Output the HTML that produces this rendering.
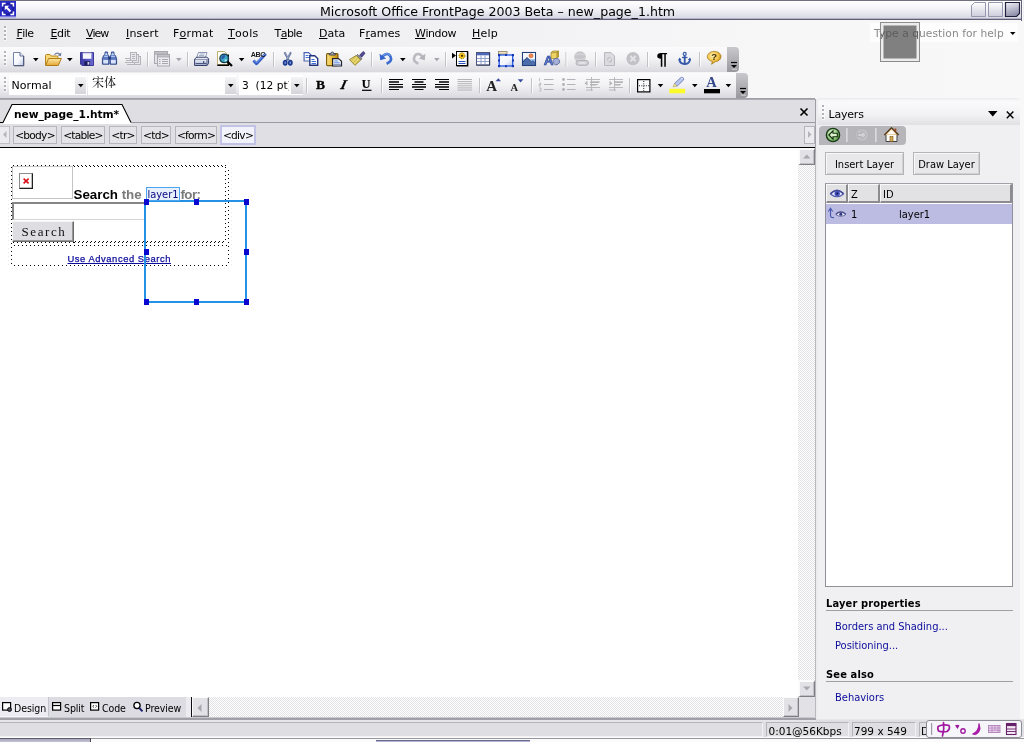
<!DOCTYPE html>
<html><head><meta charset="utf-8"><title>Microsoft Office FrontPage 2003 Beta - new_page_1.htm</title>
<style>
*{box-sizing:border-box;margin:0;padding:0}
html,body{width:1024px;height:742px;overflow:hidden;background:linear-gradient(90deg,#ebebee 0,#f1f1f3 45%,#f7f7f8 75%,#f8f8f9 100%);font-family:"DejaVu Sans","Liberation Sans",sans-serif;font-size:10.67px;color:#000}
.a{position:absolute}
.t{position:absolute;white-space:nowrap;line-height:14px}
.th{font-family:"DejaVu Sans Condensed","Liberation Sans",sans-serif;font-size:11px}
svg{position:absolute;overflow:visible}
#title{left:0;top:0;width:1021px;height:20px;background:linear-gradient(#ffffff 0,#f6f6fa 35%,#e6e6ee 70%,#d6d6e4 100%);border-top:1px solid #70707f;border-bottom:1px solid #5e5e76;box-shadow:inset 0 -1px 0 #b4b4c6}
#menubar{left:0;top:20px;width:1024px;height:27px}
.tb{left:0;height:25px;background:linear-gradient(#fbfbfc 0,#f3f3f6 45%,#e6e6ea 75%,#d8d8de 100%)}
.tbend{width:12px;height:25px;background:linear-gradient(#c9c9cd,#98989e);border-radius:0 4px 4px 0}
.grip{width:2px;background:repeating-linear-gradient(#b2b2ba 0 2px,rgba(255,255,255,.6) 2px 4px);box-shadow:1px 0 0 rgba(255,255,255,.5)}
.sep{width:1px;height:15px;background:#b4b4bc;box-shadow:1px 0 0 rgba(255,255,255,.8)}
#root{position:absolute;left:0;top:0;width:1024px;height:742px;overflow:hidden;will-change:transform}
</style></head><body><div id="root">
<!-- title bar -->
<div class="a" id="title"></div>
<div class="a" style="left:1021.300px;top:0;width:1px;height:20.500px;background:#62627a"></div><div class="a" style="left:1022.500px;top:0;width:2px;height:21px;background:#f0f0f5"></div>
<svg style="left:0;top:1px" width="16" height="17" viewBox="0 0 16 17"><rect width="16" height="15.700" fill="#2a2ac6"/><rect y="15.700" width="16" height="1.300" fill="#b8b8ee"/><circle cx="8" cy="8" r="5.200" fill="none" stroke="#1c1c98" stroke-width="1.600"/><path d="M2.600 5.600V2.600H5.600M10.400 2.600H13.400V5.600M13.400 10.400V13.400H10.400M5.600 13.400H2.600V10.400" fill="none" stroke="#fff" stroke-width="1.500"/><path d="M4.800 4.800H9.200L7.700 6.300 11.200 9.800 9.800 11.200 6.300 7.700 4.800 9.200z" fill="#fff"/></svg>
<div class="t" style="left:320px;top:3.7px;font-size:12.6px;line-height:16px">Microsoft Office FrontPage 2003 Beta – new_page_1.htm</div>
<svg style="left:971px;top:2px" width="50" height="15" viewBox="0 0 50 15">
<defs><linearGradient id="wb1" x1="0" y1="0" x2="0" y2="1"><stop offset="0" stop-color="#ffffff"/><stop offset="1" stop-color="#ccccdc"/></linearGradient>
<linearGradient id="wb3" x1="0" y1="0" x2=".3" y2="1"><stop offset="0" stop-color="#f2f2f8"/><stop offset="1" stop-color="#9090ac"/></linearGradient></defs>
<path d="M3.5 .5H14.5V14.5H.5V3.5z" fill="url(#wb1)" stroke="#9696ac"/>
<path d="M17.5 .5H31.5V14.5H17.5z" fill="url(#wb1)" stroke="#9696ac"/>
<path d="M34.5 .5H48.5V11.5L45.5 14.5H34.5z" fill="url(#wb3)" stroke="#20203c" stroke-width="1.2"/>
</svg>
<!-- menubar -->
<div class="a" id="menubar"></div>
<div class="a grip" style="left:4px;top:26px;height:15px"></div>
<div class="t" style="left:16.5px;top:27px;font-size:11px;font-kerning:none;letter-spacing:-0.53px"><u>F</u>ile</div>
<div class="t" style="left:50.5px;top:27px;font-size:11px;font-kerning:none;letter-spacing:-0.4px"><u>E</u>dit</div>
<div class="t" style="left:86px;top:27px;font-size:11px;font-kerning:none;letter-spacing:-1.0px"><u>V</u>iew</div>
<div class="t" style="left:126px;top:27px;font-size:11px;font-kerning:none;letter-spacing:0.2px"><u>I</u>nsert</div>
<div class="t" style="left:173px;top:27px;font-size:11px;font-kerning:none;letter-spacing:0.2px">F<u>o</u>rmat</div>
<div class="t" style="left:228px;top:27px;font-size:11px;font-kerning:none;letter-spacing:0.33px"><u>T</u>ools</div>
<div class="t" style="left:274.5px;top:27px;font-size:11px;font-kerning:none;letter-spacing:-0.55px">T<u>a</u>ble</div>
<div class="t" style="left:319px;top:27px;font-size:11px;font-kerning:none;letter-spacing:0.0px"><u>D</u>ata</div>
<div class="t" style="left:359px;top:27px;font-size:11px;font-kerning:none;letter-spacing:0.08px">F<u>r</u>ames</div>
<div class="t" style="left:415px;top:27px;font-size:11px;font-kerning:none;letter-spacing:-0.44px"><u>W</u>indow</div>
<div class="t" style="left:472px;top:27px;font-size:11px;font-kerning:none;letter-spacing:0.2px"><u>H</u>elp</div>
<!-- help box -->
<div class="a" style="left:870px;top:23px;width:148px;height:19px;background:#fdfdfe"></div>
<div class="t" style="left:874px;top:26.5px;color:#8a8a8a;letter-spacing:.06px;font-size:10.67px">Type a question for help</div>
<div class="a" style="left:880px;top:22px;width:40px;height:40px;background:#808080;border:1px solid #8c8c8c;box-shadow:inset 0 0 0 2.5px #ececec;overflow:hidden"><div class="t" style="left:-7px;top:3.5px;color:#5c5c5c;letter-spacing:.06px;font-size:10.67px">Type a question for help</div></div>
<svg style="left:1010px;top:32px" width="6" height="4"><path d="M0 0h5.5L2.75 3z" fill="#000"/></svg>
<!-- toolbar 1 -->
<div class="a tb" style="top:47px;width:729px"></div>
<div class="a tbend" style="left:727px;top:47px"></div>
<svg style="left:731px;top:62px" width="7" height="7"><path d="M0 .5h6" stroke="#000" stroke-width="1.2"/><path d="M0 3h6L3 6z" fill="#000"/><path d="M1 7.2h5" stroke="#fff" stroke-width=".8" opacity=".7"/></svg>
<div class="a grip" style="left:4px;top:51px;height:15px"></div>
<svg style="left:0;top:0" width="760" height="100" viewBox="0 0 760 100">
<defs>
<linearGradient id="gPage" x1="0" y1="0" x2="1" y2="1"><stop offset="0" stop-color="#ffffff"/><stop offset=".6" stop-color="#f4f6fc"/><stop offset="1" stop-color="#b8c4e4"/></linearGradient>
<linearGradient id="gFold" x1="0" y1="0" x2="0" y2="1"><stop offset="0" stop-color="#fbe9a6"/><stop offset="1" stop-color="#e6a532"/></linearGradient>
<linearGradient id="gBlue" x1="0" y1="0" x2="0" y2="1"><stop offset="0" stop-color="#8aa6e6"/><stop offset="1" stop-color="#2f4c9e"/></linearGradient>
<linearGradient id="gGray" x1="0" y1="0" x2="0" y2="1"><stop offset="0" stop-color="#f2f2f4"/><stop offset="1" stop-color="#b4b4bc"/></linearGradient>
<radialGradient id="gHelp" cx=".4" cy=".35" r=".7"><stop offset="0" stop-color="#fff2b0"/><stop offset=".6" stop-color="#f0c040"/><stop offset="1" stop-color="#b07818"/></radialGradient>
<path id="dar" d="M0 0h5.6L2.8 3.2z"/>
</defs>
<!-- new -->
<g transform="translate(13,52)"><path d="M.5 .5H7L10.5 4V13.5H.5z" fill="url(#gPage)" stroke="#7484a8"/><path d="M7 .5V4h3.5" fill="#e8ecf8" stroke="#50608c" stroke-width=".9"/><path d="M1 13.8H10.8V4" fill="none" stroke="#3c4868" stroke-width=".9"/></g>
<use href="#dar" x="33" y="58" fill="#000"/>
<!-- open -->
<g transform="translate(45,52)"><path d="M.5 13V3.5q0-1 1-1H5l1.2 1.5H12q1 0 1 1V6" fill="#f6d878" stroke="#b8861c"/><path d="M.6 13.5L3.6 6.5H16.4L13.2 13.5z" fill="url(#gFold)" stroke="#b07c14"/><path d="M9.5 2.6q3-3 5.6 .2" fill="none" stroke="#6c7c9c" stroke-width="1.3"/><path d="M16.4 .6L15.9 4.3 12.6 3.2z" fill="#6c7c9c"/></g>
<use href="#dar" x="67" y="58" fill="#000"/>
<!-- save -->
<g transform="translate(80,52)"><linearGradient id="gSave" x1="0" y1="0" x2="1" y2="0"><stop offset="0" stop-color="#3a3aa2"/><stop offset="1" stop-color="#6a6ad2"/></linearGradient><path d="M.5 .5H13.500V13.500H2L.5 12z" fill="url(#gSave)" stroke="#2e2c8c" stroke-width=".9"/><rect x="2.800" y=".8" width="8.600" height="6" fill="#f6f6fe"/><rect x="2.800" y=".8" width="8.600" height="1.300" fill="#d4d4f2"/><rect x="4.300" y="9.300" width="5.600" height="4.200" fill="#1c1c58"/><rect x="7.500" y="10" width="1.800" height="2.700" fill="#d0d0f0"/></g>
<!-- binoculars -->
<g transform="translate(102,52)"><path d="M3 0H5.600V2.200L6.600 3.600 7 5.400V12.200H.4V6.400L1.600 3.600 3 2.200z" fill="url(#gBlue)" stroke="#1c3474" stroke-width=".8"/><path d="M9.400 0H12V2.200L13.400 3.600 14.600 6.400V12.200H8V5.400L8.400 3.600 9.400 2.200z" fill="url(#gBlue)" stroke="#1c3474" stroke-width=".8"/><rect x="6.400" y="4.600" width="2.200" height="3" fill="#1c3474"/><rect x="1.200" y="7.800" width="5" height="3.800" fill="#d8e2f8"/><rect x="8.800" y="7.800" width="5" height="3.800" fill="#d8e2f8"/><rect x="3.200" y="1.600" width="2.200" height="1.100" fill="#e8f0ff"/><rect x="9.600" y="1.600" width="2.200" height="1.100" fill="#e8f0ff"/><rect x="2.200" y="4" width="3.600" height="1" fill="#b4c8f0"/><rect x="9.200" y="4" width="3.600" height="1" fill="#b4c8f0"/></g>
<!-- publish (disabled) -->
<g transform="translate(125,52)" stroke="#b4b4ba" fill="#e8e8ec"><rect x="9.500" y="4.500" width="6" height="8"/><rect x="7.500" y="2.500" width="6" height="8"/><rect x="5.500" y=".5" width="6" height="8"/><path d="M0 6.500h5M1 8.500h6M0 10.500h9M2 12.500h7M7 2.500h3M7 4.500h3M7 6.500h3" fill="none"/></g>
<rect x="147" y="52" width="1" height="15" fill="#c2c2c8"/><rect x="148" y="52" width="1" height="15" fill="#fff" opacity=".8"/>
<!-- web comp disabled -->
<g transform="translate(154,51)" stroke="#a8a8ae" fill="#e4e4e8"><rect x=".5" y=".5" width="13" height="12"/><rect x=".5" y=".5" width="13" height="2.600" fill="#c0c0c6"/><rect x="3.500" y="3.500" width="12" height="11.500" fill="#ececf0"/><rect x="3.500" y="3.500" width="12" height="2.400" fill="#c4c4ca"/><path d="M3.500 6v9M8 8.500h6M8 10.500h6M8 12.500h6M5 8.500h1.500M5 10.500h1.500M5 12.500h1.500" fill="none"/></g>
<use href="#dar" x="176" y="58" fill="#a4a4aa"/>
<rect x="187" y="52" width="1" height="15" fill="#c2c2c8"/><rect x="188" y="52" width="1" height="15" fill="#fff" opacity=".8"/>
<!-- print -->
<g transform="translate(194,52)"><linearGradient id="gPrn" x1="0" y1="0" x2="0" y2="1"><stop offset="0" stop-color="#fbfcff"/><stop offset="1" stop-color="#b4bcd4"/></linearGradient><path d="M4.500 .5H13L11.300 5.600H2.600z" fill="#fff" stroke="#6c7ca0" stroke-width=".8"/><path d="M5.600 2h5.200M5 3.600h5.200" stroke="#8090b4" stroke-width=".8"/><path d="M.6 7L2.800 5.200H12.800L14.600 6.600V11.400L13 13.500H.6z" fill="url(#gPrn)" stroke="#34406c" stroke-width="1"/><path d="M13 7.600V13.500" stroke="#34406c" stroke-width=".8"/><path d="M.6 7.400H13L14.600 6.600" fill="none" stroke="#5c6c94" stroke-width=".7"/><path d="M1.500 11.600H12.500" stroke="#44507c" stroke-width="1.100"/><rect x="9" y="9.300" width="1.300" height="1.500" fill="#28305c"/></g>
<!-- preview -->
<g transform="translate(217,51)"><path d="M.5 .5H7.500L10.500 3.500V13.500H.5z" fill="#fffef2" stroke="#b8a868" stroke-width=".9"/><path d="M.3 14.300H11.300V3.500" fill="none" stroke="#000" stroke-width="1.400"/><circle cx="7.200" cy="7.400" r="4.300" fill="#3aa4c4" stroke="#16384c" stroke-width="1.300"/><path d="M4.500 6q1.500-2.500 3.500-1.800 .5 1.500-.8 2.500-1 1.800-2.700 1.200z" fill="#2c58b0"/><path d="M7.500 8.500q1.800-.8 2.800 .5-1 1.800-2.500 1.500z" fill="#a8e4ec"/><path d="M10.400 10.600L15 15" stroke="#000" stroke-width="2.200"/></g>
<use href="#dar" x="238.800" y="58" fill="#000"/>
<!-- spelling -->
<g transform="translate(251,51)"><path d="M2.500 9.500L5.500 12.800 14.800 2.800" fill="none" stroke="#305ac4" stroke-width="2.800" stroke-linejoin="round"/><path d="M2.500 9L5.500 12 14.500 2.500" fill="none" stroke="#86a8f0" stroke-width=".9"/><text x="-.3" y="5.800" font-family="Liberation Sans,sans-serif" font-weight="bold" font-size="7.200" fill="#1c1c1c" letter-spacing="-.4">ABC</text></g>
<rect x="273" y="52" width="1" height="15" fill="#c2c2c8"/><rect x="274" y="52" width="1" height="15" fill="#fff" opacity=".8"/>
<!-- cut -->
<g transform="translate(283,52)"><path d="M1.600 .3L5.700 8.200M7.900 .3L3.800 8.200" stroke="#5c6c98" stroke-width="1.900" fill="none"/><path d="M2.100 .6L5.500 7M7.400 .6L4 7" stroke="#b8c4dc" stroke-width=".6" fill="none"/><ellipse cx="2.200" cy="10.700" rx="1.600" ry="2.100" fill="#7c98dc" stroke="#1c3c90" stroke-width="1.700"/><ellipse cx="7.300" cy="10.700" rx="1.600" ry="2.100" fill="#7c98dc" stroke="#1c3c90" stroke-width="1.700"/></g>
<!-- copy -->
<g transform="translate(303.500,52)"><path d="M.6 .6H5L7.800 3.200V9H.6z" fill="#fff" stroke="#4c64b0" stroke-width="1.200"/><path d="M2 3.500h3M2 5.500h4.200" stroke="#4c78d8" stroke-width="1"/><path d="M6.300 3.800H11.200L14.200 6.600V13.300H6.300z" fill="#fff" stroke="#24347c" stroke-width="1.400"/><path d="M8 7.500h3M8 9.500h4.500M8 11.500h4.500" stroke="#3c6cd8" stroke-width="1"/></g>
<!-- paste -->
<g transform="translate(326,52)"><linearGradient id="gClip" x1="0" y1="0" x2="1" y2="0"><stop offset="0" stop-color="#fae488"/><stop offset=".5" stop-color="#e8b838"/><stop offset="1" stop-color="#c08414"/></linearGradient><rect x=".6" y="1.600" width="11.400" height="12" rx="1" fill="url(#gClip)" stroke="#7c5808" stroke-width="1.100"/><path d="M3.300 3V1.600H4.800Q5 0 6.300 0T7.800 1.600H9.300V3z" fill="#a8acb8" stroke="#3c4048" stroke-width=".9"/><path d="M6.600 6.600H12.500L15.500 9.200V14H6.600z" fill="#f4f6fc" stroke="#20242c" stroke-width="1.200"/><path d="M8.200 9h4M8.200 10.800h5.600" stroke="#5c8ce0" stroke-width="1"/><rect x="7.300" y="11.900" width="7.500" height="1.500" fill="#8c98b8"/></g>
<!-- format painter -->
<g transform="translate(349,51)"><path d="M10.600 4.200L14.200 .5 16 2.300 12.600 6.200z" fill="#544c98" stroke="#2c2860" stroke-width=".8"/><path d="M8.600 3.400L13 7.800 11.600 9 7.400 4.600z" fill="#8c90a0" stroke="#4c5060" stroke-width=".7"/><path d="M7.200 4.500L11.700 9 6 14.300 .5 8.600z" fill="#e8d870" stroke="#8c7820" stroke-width=".9"/><path d="M2.600 9.800L6.800 5.800M4.400 11.600L8.600 7.600M6.200 13.200L10.400 9.200" stroke="#c4ac40" stroke-width=".8"/></g>
<rect x="371" y="52" width="1" height="15" fill="#c2c2c8"/><rect x="372" y="52" width="1" height="15" fill="#fff" opacity=".8"/>
<!-- undo -->
<g transform="translate(379,52)"><path d="M3.500 4.300Q9 -0.500 11.400 4.400T7.600 11.800" fill="none" stroke="#3c6cd0" stroke-width="2.600"/><path d="M3.500 3.800Q9 -0.800 11.200 4" fill="none" stroke="#8cacf0" stroke-width=".8"/><path d="M.6 1.800L1.200 8.200 7.200 6.600z" fill="#3464cc"/></g>
<use href="#dar" x="400" y="58" fill="#000"/>
<!-- redo disabled -->
<g transform="translate(413,52)" opacity=".95"><path d="M9.500 4.300Q4 -0.500 1.600 4.400T5.400 11.800" fill="none" stroke="#b8b8be" stroke-width="2.600"/><path d="M12.400 1.800L11.800 8.200 5.800 6.600z" fill="#b0b0b6"/></g>
<use href="#dar" x="434" y="58" fill="#a4a4aa"/>
<rect x="445" y="52" width="1" height="15" fill="#c2c2c8"/><rect x="446" y="52" width="1" height="15" fill="#fff" opacity=".8"/>
<!-- web component -->
<g transform="translate(452,51)"><rect x="4.500" y=".5" width="11" height="14" fill="#fff" stroke="#000" stroke-width="1"/><path d="M15.600 .5V14.700H4.500" fill="none" stroke="#000" stroke-width="1.500"/><path d="M0 1.800L4 4.600 0 7.400z" fill="#000"/><circle cx="10" cy="4.800" r="3" fill="#f4c41c" stroke="#8c6808" stroke-width=".9" stroke-dasharray="1.300 .9"/><circle cx="10" cy="4.800" r="1.100" fill="#3c2c00"/><path d="M6.500 10.500h7M6.500 12.500h7" stroke="#2c54bc" stroke-width="1"/></g>
<!-- table -->
<g transform="translate(476,52)"><rect x=".5" y=".5" width="13" height="12.500" fill="#fcfcff" stroke="#4c5880" stroke-width="1"/><rect x="1" y="1" width="12" height="2.300" fill="#4c68b8"/><path d="M1 6.500h12M1 9.500h12M5 3.300v9.500M9 3.300v9.500" stroke="#8898c4" stroke-width=".9"/><path d="M.5 13.200H13.700V.5" fill="none" stroke="#2c3454" stroke-width=".9"/></g>
<!-- layer -->
<g transform="translate(498,51)"><rect x=".5" y=".5" width="8.500" height="2.600" fill="#f0e4c0" stroke="#988c74" stroke-width=".9"/><rect x="1.200" y="4" width="13.500" height="11" fill="url(#gPage)" stroke="#2458e0" stroke-width="1.300"/><g fill="#1434b8"><rect x="0" y="3" width="2.200" height="2.200"/><rect x="7" y="3" width="2" height="2"/><rect x="13.800" y="3" width="2.200" height="2.200"/><rect x="0" y="8.500" width="2" height="2"/><rect x="14" y="8.500" width="2" height="2"/><rect x="0" y="14" width="2.200" height="2.200"/><rect x="7" y="14.200" width="2" height="2"/><rect x="13.800" y="14" width="2.200" height="2.200"/></g></g>
<!-- picture -->
<g transform="translate(522,52)"><rect x=".5" y=".5" width="13" height="13" fill="#a4c8f0" stroke="#24407c" stroke-width="1.100"/><rect x="1" y="1" width="12" height="6" fill="#f4f8fe"/><circle cx="9" cy="3.800" r="2" fill="#f08850" stroke="#c85820" stroke-width=".6"/><path d="M1 10L5 5.500 9 9.500 11 8 13 10V13H1z" fill="#4c6cac"/><path d="M1 10L5 5.500 9 9.500" fill="none" stroke="#1c3468" stroke-width=".9"/></g>
<!-- drawing -->
<g transform="translate(544,51)"><path d="M7 1.600L9 0H14.500V6L12.500 7.600H7z" fill="#ecd464" stroke="#94781c" stroke-width=".7"/><path d="M12.500 1.600V7.600L14.500 6V0z" fill="#b89c30"/><path d="M7 1.600H12.500L14.500 0" fill="none" stroke="#94781c" stroke-width=".6"/><rect x="9" y="7.300" width="6.600" height="6.400" rx="3.100" fill="#a4b0d8" stroke="#5c6898" stroke-width=".8" transform="rotate(-35 12.300 10.500)"/><text x="-.3" y="14" font-family="Liberation Sans,sans-serif" font-weight="bold" font-size="13.500" fill="#5c78cc" stroke="#2c4490" stroke-width=".6">A</text></g>
<rect x="565.500" y="52" width="1" height="15" fill="#c2c2c8"/><rect x="566.500" y="52" width="1" height="15" fill="#fff" opacity=".8"/>
<!-- hyperlink disabled -->
<g transform="translate(573,51)"><circle cx="7" cy="6" r="5.800" fill="#c6c6ca"/><path d="M2.500 4q4-2.500 9 0M1.500 7.500q5 2.500 11 0" stroke="#dcdce0" fill="none" stroke-width=".9"/><rect x="3" y="9.500" width="12.500" height="4.800" rx="2.400" fill="#d0d0d4" stroke="#b0b0b6" stroke-width="1"/><path d="M6 12h6.500" stroke="#eeeef0" stroke-width="1.200"/></g>
<rect x="595" y="52" width="1" height="15" fill="#c2c2c8"/><rect x="596" y="52" width="1" height="15" fill="#fff" opacity=".8"/>
<!-- refresh disabled -->
<g transform="translate(604,52)"><path d="M.5 .5H7L10.500 4V13.500H.5z" fill="#dcdce0" stroke="#b8b8be"/><path d="M3.500 8.500Q3.500 5 6.500 5.500M7.500 7Q7.500 10.500 4.500 10" fill="none" stroke="#bcbcc2" stroke-width="1.100"/></g>
<!-- stop disabled -->
<g transform="translate(626,52)"><circle cx="7" cy="6.700" r="6.600" fill="#c2c2c6"/><path d="M4.300 4L9.700 9.400M9.700 4L4.300 9.400" stroke="#e4e4e8" stroke-width="2"/></g>
<rect x="647" y="52" width="1" height="15" fill="#c2c2c8"/><rect x="648" y="52" width="1" height="15" fill="#fff" opacity=".8"/>
<!-- pilcrow -->
<text x="656.400" y="64.800" font-family="Liberation Sans,sans-serif" font-weight="bold" font-size="16.500" fill="#000" textLength="11.300" lengthAdjust="spacingAndGlyphs">¶</text>
<!-- anchor -->
<g transform="translate(678.500,52)" fill="none" stroke="#3458a8"><circle cx="6.200" cy="1.900" r="1.500" stroke-width="1.200"/><path d="M6.200 3.500V11.500" stroke-width="1.800"/><path d="M3.500 5.500h5.400" stroke-width="1.300"/><path d="M.8 6.800Q1.200 11.800 6.200 12T11.600 6.800" stroke-width="1.900"/><path d="M0 8.500L.8 5.500 3 7.800zM12.400 8.500L11.600 5.500 9.400 7.800z" fill="#3458a8" stroke="none"/></g>
<rect x="699" y="52" width="1" height="15" fill="#c2c2c8"/><rect x="700" y="52" width="1" height="15" fill="#fff" opacity=".8"/>
<!-- help -->
<g transform="translate(707,51)"><path d="M7 .4C11 .4 14 2.600 14 5.600S11.400 10.400 8.200 10.700L4.600 13.300 5.400 10.400C2.200 9.800 .3 7.900 .3 5.600S3 .4 7 .4z" fill="url(#gHelp)" stroke="#a87c1c" stroke-width=".8"/><text x="4.300" y="9.200" font-family="Liberation Sans,sans-serif" font-weight="bold" font-size="9.500" fill="#3c2c08">?</text></g>
</svg>
<!-- toolbar 2 -->
<div class="a tb" style="top:73px;width:738px"></div>
<div class="a tbend" style="left:736px;top:73px"></div>
<svg style="left:740px;top:88px" width="7" height="7"><path d="M0 .5h6" stroke="#000" stroke-width="1.200"/><path d="M0 3h6L3 6z" fill="#000"/><path d="M1 7.200h5" stroke="#fff" stroke-width=".8" opacity=".7"/></svg>
<div class="a grip" style="left:4px;top:77px;height:15px"></div>
<div class="a" style="left:9px;top:75px;width:78px;height:20px;background:#fff"></div>
<div class="a" style="left:75px;top:77px;width:11px;height:17px;background:linear-gradient(#f4f4f6,#d4d4da)"></div>
<div class="t" style="left:11.500px;top:79px;font-size:11px;font-kerning:none">Normal</div>
<div class="a" style="left:88px;top:75px;width:148px;height:20px;background:#fff"></div>
<div class="a" style="left:225px;top:77px;width:11px;height:17px;background:linear-gradient(#f4f4f6,#d4d4da)"></div>
<div class="t" style="left:92px;top:74.500px;font-family:'Liberation Serif','Noto Serif CJK SC','Noto Sans CJK SC',serif;font-size:12px;line-height:16px">宋体</div>
<div class="a" style="left:239px;top:75px;width:64px;height:20px;background:#fff"></div>
<div class="a" style="left:291px;top:77px;width:12px;height:17px;background:linear-gradient(#f4f4f6,#d4d4da)"></div>
<div class="t" style="left:242px;top:79px;width:46.500px;overflow:hidden;letter-spacing:0">3&nbsp; (12 pt)</div>
<svg style="left:0;top:0" width="760" height="100" viewBox="0 0 760 100">
<use href="#dar" x="78" y="84" fill="#000"/><use href="#dar" x="228" y="84" fill="#000"/><use href="#dar" x="294" y="84" fill="#000"/>
<rect x="306" y="78" width="1" height="15" fill="#c2c2c8"/><rect x="307" y="78" width="1" height="15" fill="#fff" opacity=".8"/>
<text x="316" y="89" font-family="Liberation Serif,serif" font-weight="bold" font-size="13.500" fill="#000" stroke="#000" stroke-width=".3">B</text>
<text x="0" y="0" transform="translate(340,89) skewX(-14)" font-family="Liberation Serif,serif" font-weight="bold" font-style="italic" font-size="13.500" fill="#000" stroke="#000" stroke-width=".3">I</text>
<text x="361.800" y="88.200" font-family="Liberation Serif,serif" font-weight="bold" font-size="12" fill="#000" stroke="#000" stroke-width=".2">U</text><rect x="362" y="89.700" width="9.500" height="1.200" fill="#000"/>
<rect x="381" y="78" width="1" height="15" fill="#c2c2c8"/><rect x="382" y="78" width="1" height="15" fill="#fff" opacity=".8"/>
<g stroke="#000" stroke-width="1" fill="none">
<path d="M389 79.500h14M389 84.500h14M389 89.500h10M412 79.500h14M412 84.500h14M414.500 89.500h9M435 79.500h14M435 84.500h14M439 89.500h10"/>
<path d="M389 82h10M389 87h14M414.500 82h9M412 87h14M439 82h10M435 87h14" stroke-width="1.300"/>
</g>
<path d="M457.500 79.500h14.500M457.500 81.600h14.500M457.500 83.700h14.500M457.500 85.800h14.500M457.500 87.900h14.500M457.500 90h14.500" stroke="#b4b4b8" stroke-width="1"/>
<rect x="479" y="78" width="1" height="15" fill="#c2c2c8"/><rect x="480" y="78" width="1" height="15" fill="#fff" opacity=".8"/>
<text x="486.300" y="90.500" font-family="Liberation Serif,serif" font-weight="bold" font-size="15" fill="#222">A</text><path d="M495.500 81.300L498.300 78.300 501 81.300z" fill="#3c4c9c"/>
<text x="510.500" y="90.500" font-family="Liberation Serif,serif" font-weight="bold" font-size="10.500" fill="#222">A</text><path d="M517.800 79.300h5.600L520.600 82.400z" fill="#3c4c9c"/>
<rect x="531" y="78" width="1" height="15" fill="#c2c2c8"/><rect x="532" y="78" width="1" height="15" fill="#fff" opacity=".8"/>
<g stroke="#b4b4b8" fill="none" stroke-width="1.100">
<path d="M544 79.500h9.500M544 84.500h9.500M544 89.500h9.500"/><path d="M539.500 78v3M539 83h2v1.500h-2v1.500h2M539 88h2v3h-2" stroke-width=".8"/>
<path d="M567 79.500h8.500M567 84.500h8.500M567 89.500h8.500"/><circle cx="563.500" cy="79.500" r=".9" fill="#b4b4b8"/><circle cx="563.500" cy="84.500" r=".9" fill="#b4b4b8"/><circle cx="563.500" cy="89.500" r=".9" fill="#b4b4b8"/>
<path d="M586 79.500h14M591 82h9M591 84.500h7M586 87.500h14M586 90h7M591.500 77v14" stroke-width=".9"/><path d="M590 82.200h9M590 84.700h6" stroke-width="1.600"/><path d="M584.500 83.300l3-2.500v5z" fill="#b4b4b8" stroke="none"/>
<path d="M609 79.500h14M614 82h9M614 84.500h7M609 87.500h14M609 90h7M614.500 77v14" stroke-width=".9"/><path d="M614 82.200h9M614 84.700h6" stroke-width="1.600"/><path d="M612.500 83.300l-3-2.500v5z" fill="#b4b4b8" stroke="none"/>
</g>
<rect x="629" y="78" width="1" height="15" fill="#c2c2c8"/><rect x="630" y="78" width="1" height="15" fill="#fff" opacity=".8"/>
<rect x="637.600" y="79.600" width="12.300" height="12.300" fill="#fbfbfd" stroke="#000" stroke-width="1.200"/><path d="M643.750 81v10M639 85.750h10" stroke="#222" stroke-width="1" stroke-dasharray="1 1.300"/>
<use href="#dar" x="657.700" y="84" fill="#000"/>
<g transform="translate(672,77)"><path d="M8.500 .8Q10-.4 11.200 .8T11.200 3.400L5 9.200 2.300 6.600z" fill="#b8c4ec" stroke="#6878b0" stroke-width=".8"/><path d="M2.300 6.600L5 9.200 1 10z" fill="#f4e4a0" stroke="#a89850" stroke-width=".5"/><path d="M9 1.500Q10 .8 10.800 1.600" stroke="#f0f4ff" stroke-width=".8" fill="none"/></g>
<rect x="669.300" y="88.800" width="15.800" height="4.500" fill="#fbfb2c"/>
<use href="#dar" x="692" y="84" fill="#000"/>
<text x="706.200" y="87.300" font-family="Liberation Serif,serif" font-weight="bold" font-size="14.500" fill="#34488c">A</text>
<rect x="704" y="89" width="16" height="4.300" fill="#000"/>
<use href="#dar" x="725.600" y="84" fill="#000"/>
</svg>
<!-- line under toolbars -->
<div class="a" style="left:0;top:98px;width:815px;height:2px;background:linear-gradient(#9a9aa2,#b2b2ba)"></div>
<!-- doc tab row -->
<div class="a" style="left:0;top:100px;width:815px;height:24px;background:#dfdfe3"></div>
<div class="a" style="left:815px;top:99px;width:1px;height:620px;background:linear-gradient(#9c9ca4 0,#a4a4ac 8%,#b8b8be 9%,#b8b8be 100%)"></div>
<div class="a" style="left:816px;top:99px;width:2px;height:620px;background:#ececf0"></div>
<svg style="left:0;top:100px" width="815" height="24" viewBox="0 100 815 24">
<path d="M2.500 124L12 104.500H122L131.500 124z" fill="#fff"/>
<path d="M131 122.500H815" stroke="#9a9aa2" stroke-width="1"/>
<path d="M0 122.500H3L12 104.500H122L131 122.500" fill="none" stroke="#000" stroke-width="1.100"/>
<path d="M800.500 108.500L807.500 115.500M807.500 108.500L800.500 115.500" stroke="#000" stroke-width="1.600"/>
</svg>
<div class="t" style="left:14px;top:107.5px;font-weight:bold;letter-spacing:-.05px">new_page_1.htm*</div>
<!-- tag bar -->
<div class="a" style="left:0;top:124px;width:815px;height:23px;background:#e0e0e4"></div>
<div class="a" style="left:0;top:146.800px;width:815px;height:1.300px;background:#000"></div>
<div class="a" style="left:0;top:126px;width:10px;height:18px;background:#ececf0;border:1px solid #c0c0c6;border-left:0"></div>
<svg style="left:3px;top:131px" width="4" height="8"><path d="M3.500 0V7L0 3.500z" fill="#b4b4ba"/></svg>
<div class="a" style="left:804px;top:126px;width:11px;height:18px;background:#ececf0;border:1px solid #b4b4ba"></div>
<svg style="left:808px;top:131px" width="4" height="8"><path d="M0 0V7L3.500 3.500z" fill="#b4b4ba"/></svg>
<style>.tg{position:absolute;top:126px;height:18px;border:1px solid #b6b6bc;background:#e4e4e8;font-size:10.670px;line-height:17px;text-align:center;white-space:nowrap;letter-spacing:-.75px}</style>
<div class="tg" style="left:13px;width:44px">&lt;body&gt;</div>
<div class="tg" style="left:61px;width:44px">&lt;table&gt;</div>
<div class="tg" style="left:109px;width:28px">&lt;tr&gt;</div>
<div class="tg" style="left:141px;width:30px">&lt;td&gt;</div>
<div class="tg" style="left:175px;width:42px">&lt;form&gt;</div>
<div class="tg" style="left:220px;top:125px;width:36px;height:20px;border:2px solid #c2c2e6;background:#f2f2fa;line-height:17px">&lt;div&gt;</div>
<!-- editor -->
<div class="a" style="left:0;top:148px;width:798px;height:549px;background:#fff"></div>
<!-- v scrollbar -->
<div class="a" style="left:798px;top:148px;width:17px;height:549px;background:#f0f0f3;background-image:repeating-conic-gradient(#fff 0 25%,#e2e2e6 0 50%);background-size:2px 2px"></div>
<style>.sb{position:absolute;background:#e2e2e6;border-style:solid;border-width:2px 1.500px 1.500px 2px;border-color:#fbfbfc #7e7e84 #7e7e84 #fbfbfc;box-shadow:inset -1px -1px 0 #c0c0c6}</style>
<div class="sb" style="left:798px;top:148px;width:17px;height:17px"></div>
<svg style="left:803px;top:154px" width="8" height="5"><path d="M0 4.500H7.500L3.750 .5z" fill="#a8a8ae"/></svg>
<div class="sb" style="left:798px;top:680px;width:17px;height:17px"></div>
<svg style="left:803px;top:686px" width="8" height="5"><path d="M0 .5H7.500L3.750 4.500z" fill="#a8a8ae"/></svg>
<!-- document content -->
<svg style="left:0;top:150px" width="260" height="130" viewBox="0 150 260 130"><g stroke="#000" stroke-width="1" stroke-dasharray="1 3" fill="none">
<path d="M13 165.500H226"/><path d="M74 166.500H226"/><path d="M11.500 167V264"/><path d="M225.500 167V243"/><path d="M228.500 170V263"/>
<path d="M13 242.500H75"/><path d="M75 241.500H226"/><path d="M74 242.500H226"/><path d="M14 245.500H228"/><path d="M14 265.500H228"/></g>
<g stroke="#ececec" stroke-width="1" stroke-dasharray="1 3" fill="none"><path d="M12 162.500H230"/><path d="M231.500 164V268"/><path d="M12 268.500H230"/><path d="M8.500 164V268"/></g></svg>
<div class="a" style="left:12px;top:166px;width:61px;height:33px;border:1px solid #c4c4c4;background:#fff"></div>
<div class="a" style="left:19px;top:173px;width:14px;height:16px;background:#fff;border:1px solid #8a8a8a;border-right-color:#202020;border-bottom-color:#202020;box-shadow:inset -.5px -.5px 0 #808080"></div>
<svg style="left:23px;top:177.500px" width="7" height="7"><path d="M.6 .6L5.600 5.400M5.600 .6L.6 5.400" stroke="#d81018" stroke-width="1.600"/></svg>
<div class="t" style="left:73.500px;top:186.500px;font-family:'Liberation Sans',sans-serif;font-weight:bold;font-size:13.330px;line-height:16px">Search <span style="color:#7a7a7a">the</span></div>
<div class="t" style="left:180.500px;top:186.500px;font-family:'Liberation Sans',sans-serif;font-weight:bold;font-size:13.330px;line-height:16px;color:#7a7a7a;letter-spacing:-.6px">for:</div>
<div class="a" style="left:12px;top:202px;width:134px;height:18px;background:#fff;border-style:solid;border-width:2px 1px 1px 2px;border-color:#868686 #d4d4d4 #d4d4d4 #868686"></div>
<div class="a" style="left:12px;top:221px;width:62px;height:21px;background:#dedee2;border:1px solid;border-color:#f4f4f4 #6c6c6c #6c6c6c #f4f4f4;box-shadow:inset -1px -1px 0 #98989c"></div>
<div class="t" style="left:21.500px;top:223.500px;font-family:'Liberation Serif','DejaVu Serif',serif;font-size:13px;line-height:15px;letter-spacing:1.600px;color:#111">Search</div>
<div class="t" style="left:67.500px;top:251.500px;font-family:'Liberation Sans',sans-serif;font-size:9.400px;line-height:14px;letter-spacing:.56px;color:#0c0c9c;-webkit-text-stroke:.25px #0c0c9c;text-decoration:underline;text-underline-offset:.6px;text-decoration-thickness:1px">Use Advanced Search</div>
<!-- layer -->
<div class="a" style="left:144px;top:200px;width:103px;height:103px;border:2px solid #2492e4"></div>
<div class="a th" style="left:146px;top:187px;width:34px;height:14px;border:1px solid #4aa4f0;background:#e8f0fc;color:#080880;line-height:13px;text-align:center;font-size:11px">layer1</div>
<style>.h{position:absolute;width:5.600px;height:5.600px;background:#0808d0}</style>
<div class="h" style="left:143.700px;top:199.300px"></div><div class="h" style="left:193.700px;top:199.300px"></div><div class="h" style="left:243.700px;top:199.300px"></div>
<div class="h" style="left:143.700px;top:249.300px"></div><div class="h" style="left:243.700px;top:249.300px"></div>
<div class="h" style="left:143.700px;top:299.300px"></div><div class="h" style="left:193.700px;top:299.300px"></div><div class="h" style="left:243.700px;top:299.300px"></div>
<!-- task pane -->
<div class="a" style="left:818px;top:98px;width:202px;height:621px;background:#f0f0f2;border-radius:0 4px 0 0"></div>
<div class="a" style="left:818px;top:98px;width:202px;height:27px;background:linear-gradient(#e9e9ec 0,#f6f6f8 8%,#fafafb 16%,#f2f2f4 60%,#e1e1e5 100%);border-radius:0 4px 0 0"></div>
<div class="a grip" style="left:822px;top:105px;height:15px"></div>
<div class="t" style="left:828.500px;top:108px;font-size:11px;font-kerning:none;letter-spacing:-.2px">Layers</div>
<svg style="left:988px;top:111px" width="28" height="8"><path d="M0 0H9.500L4.750 5.500z" fill="#000"/><path d="M18.800 .6L25.400 7.200M25.400 .6L18.800 7.200" stroke="#000" stroke-width="1.400"/></svg>
<div class="a" style="left:819px;top:126px;width:87px;height:19px;background:#b6b6ba;border-radius:4px 4px 4px 0"></div>
<svg style="left:819px;top:126px" width="87" height="19" viewBox="819 126 87 19">
<defs><radialGradient id="gGreen" cx=".4" cy=".35" r=".75"><stop offset="0" stop-color="#e4f6d8"/><stop offset=".55" stop-color="#98cc84"/><stop offset="1" stop-color="#4c8c40"/></radialGradient>
<linearGradient id="gRoof" x1="0" y1="0" x2="1" y2="1"><stop offset="0" stop-color="#f8d898"/><stop offset="1" stop-color="#c88838"/></linearGradient></defs>
<circle cx="833" cy="135" r="6.600" fill="url(#gGreen)" stroke="#1c3c18" stroke-width="1.400"/>
<path d="M828.800 135L833 130.800V133.300H837.300V136.700H833V139.200z" fill="#dcf2cc" stroke="#102c0c" stroke-width="1.100"/>
<rect x="846.300" y="128" width="1.200" height="14" fill="#e8e8ea"/>
<circle cx="862" cy="135" r="6.500" fill="#c2c2c6" stroke="#b0b0b4" stroke-width=".8"/>
<path d="M866.200 135L862 130.800V133.300H857.700V136.700H862V139.200z" fill="#d2d2d6" stroke="#a8a8ac" stroke-width=".8"/>
<rect x="875.300" y="128" width="1.200" height="14" fill="#e8e8ea"/>
<g transform="translate(884,127)"><path d="M2 7.500V14.500H13V7.500" fill="#fcfcf4" stroke="#404048" stroke-width="1"/><path d="M.3 8L7.500 .8 14.700 8" fill="url(#gRoof)" stroke="#50381c" stroke-width="1.300" stroke-linejoin="round"/><path d="M7.500 2.500L2.500 7.500H12.500z" fill="#fcfcf4"/><rect x="6" y="9.500" width="3" height="5" fill="#d8a850" stroke="#785820" stroke-width=".6"/><rect x="10.500" y="1.500" width="1.800" height="3" fill="#a04828"/></g>
</svg>
<style>.btn{position:absolute;top:152px;height:23px;background:#e8e8ea;border:1px solid #b4b4b8;box-shadow:inset 1px 1px 0 #f8f8f8,inset -1px -1px 0 #d0d0d4;text-align:center;line-height:23px;white-space:nowrap}</style>
<div class="btn th" style="left:825px;width:79px">Insert Layer</div>
<div class="btn th" style="left:913px;width:67px">Draw Layer</div>
<!-- list -->
<div class="a" style="left:825px;top:183px;width:188px;height:404px;background:#fff;border:1px solid #909098;border-top-color:#a0a0a8"></div>
<style>.hd{position:absolute;top:184px;height:19px;background:#e2e2e4;border-right:2px solid #8c8c90;border-bottom:2px solid #8c8c90;border-top:1px solid #f8f8f8;border-left:1px solid #f8f8f8}</style>
<div class="hd" style="left:826px;width:22px"></div>
<div class="hd" style="left:848px;width:32px"></div>
<div class="hd" style="left:880px;width:132px"></div>
<div class="t th" style="left:851px;top:188px">Z</div>
<div class="t th" style="left:883px;top:188px">ID</div>
<div class="a" style="left:826px;top:204px;width:186px;height:20px;background:#bcbce2"></div>
<div class="t th" style="left:851px;top:208px">1</div>
<div class="t th" style="left:899px;top:208px">layer1</div>
<svg style="left:826px;top:184px" width="22" height="40" viewBox="826 184 22 40">
<path d="M830.500 194Q837 187.500 843.500 194 837 199.500 830.500 194z" fill="#e8ecfc" stroke="#5058a8" stroke-width="1.100"/><path d="M830.500 193.500Q837 187 843.500 193.500" fill="none" stroke="#3c4494" stroke-width="1.500"/><circle cx="837.200" cy="193.600" r="2.700" fill="#4450b8"/><circle cx="837.200" cy="193.600" r="1" fill="#181c58"/>
<path d="M835.800 214.500Q840.800 210 845.800 214.500 840.800 218 835.800 214.500z" fill="#f0f0fc" stroke="#585c98" stroke-width=".9"/><path d="M835.800 214.200Q840.800 209.700 845.800 214.200" fill="none" stroke="#484c8c" stroke-width="1.200"/><circle cx="840.800" cy="214.300" r="1.500" fill="#30347c"/>
<path d="M830.500 209V215.500Q830.500 218 834 217.500" fill="none" stroke="#4858b0" stroke-width="1.200"/><path d="M828.300 211.500L830.500 208.300 832.700 211.500" fill="none" stroke="#4858b0" stroke-width="1.100"/>
</svg>
<!-- pane links -->
<div class="t th" style="left:826px;top:597px;font-weight:bold;letter-spacing:.15px">Layer properties</div>
<div class="a" style="left:826px;top:610px;width:187px;height:1px;background:#a0a0a4"></div>
<div class="t th" style="left:835px;top:620px;color:#0c0c9c">Borders and Shading...</div>
<div class="t th" style="left:835px;top:639px;color:#0c0c9c">Positioning...</div>
<div class="t th" style="left:826px;top:668px;font-weight:bold;letter-spacing:.15px">See also</div>
<div class="a" style="left:826px;top:681px;width:187px;height:1px;background:#a0a0a4"></div>
<div class="t th" style="left:835px;top:691px;color:#0c0c9c">Behaviors</div>
<!-- view bar -->
<div class="a" style="left:0;top:697px;width:815px;height:21px;background:#e0e0e4"></div>
<div class="a" style="left:0;top:697px;width:49px;height:20px;background:#ececf2;border-right:1px solid #c4c4cc;border-bottom:1px solid #f4f4f8"></div>
<div class="a" style="left:49px;top:697px;width:137px;height:20px;background:#dcdce2"></div>
<div class="a" style="left:186px;top:697px;width:5px;height:20px;background:#ececf0"></div>
<div class="a" style="left:190.500px;top:697px;width:1.600px;height:20px;background:#101014"></div>
<div class="t th" style="left:14px;top:701px;font-size:10.500px;letter-spacing:-.1px">Design</div>
<div class="t th" style="left:64px;top:701px;font-size:10.500px;letter-spacing:-.1px">Split</div>
<div class="t th" style="left:102px;top:701px;font-size:10.500px;letter-spacing:-.1px">Code</div>
<div class="t th" style="left:145px;top:701px;font-size:10.500px;letter-spacing:-.1px">Preview</div>
<svg style="left:0;top:697px" width="190" height="20" viewBox="0 697 190 20">
<rect x="2.600" y="702.600" width="8" height="7.500" fill="#fff" stroke="#000" stroke-width="1.200"/><circle cx="9.500" cy="709.500" r="2" fill="#505058" stroke="#000" stroke-width=".8"/>
<rect x="52.600" y="702.600" width="8" height="7.500" fill="#fff" stroke="#000" stroke-width="1.200"/><path d="M52.600 705.500h8" stroke="#000" stroke-width="1.200"/>
<rect x="90.600" y="702.600" width="8" height="7.500" fill="#fff" stroke="#000" stroke-width="1.200"/><path d="M94 705l-1.300 1.300L94 707.600M95.500 705l1.300 1.300-1.300 1.300" fill="none" stroke="#000" stroke-width=".7"/>
<circle cx="137" cy="705.500" r="3.100" fill="#fff" stroke="#000" stroke-width="1.300"/><path d="M139.300 708L142.500 711.300" stroke="#1c1c6c" stroke-width="1.900"/>
</svg>
<!-- h scrollbar -->
<div class="a" style="left:209px;top:697px;width:574px;height:20px;background:#f0f0f3;background-image:repeating-conic-gradient(#fff 0 25%,#e2e2e6 0 50%);background-size:2px 2px"></div>
<div class="sb" style="left:192px;top:697px;width:17px;height:20px;border-width:.5px 1.500px 1.500px 1px"></div>
<svg style="left:196.500px;top:703.500px" width="5" height="8"><path d="M4.500 0V8L.5 4z" fill="#a8a8ae"/></svg>
<div class="sb" style="left:783px;top:697px;width:15.500px;height:20px;border-width:.5px 1.500px 1.500px 1px"></div>
<svg style="left:788px;top:703.500px" width="5" height="8"><path d="M.5 0V8L4.500 4z" fill="#a8a8ae"/></svg>
<div class="a" style="left:799px;top:697px;width:16px;height:20px;background:#e2e2e6"></div>
<!-- lines + status bar -->
<div class="a" style="left:0;top:717px;width:816px;height:1px;background:#c8c8ce"></div>
<div class="a" style="left:0;top:718px;width:816px;height:2px;background:#a0a0a8"></div>
<div class="a" style="left:0;top:720px;width:1024px;height:17px;background:#dfdfe3"></div>
<div class="a" style="left:816px;top:719px;width:208px;height:1px;background:#e6e6ea"></div>
<div class="a" style="left:0;top:720px;width:816px;height:2px;background:#e6e6ea"></div>
<style>.sp{position:absolute;top:722px;height:15px;border:1px solid;border-color:#b4b4ba #f2f2f4 #f2f2f4 #b4b4ba}</style>
<div class="sp" style="left:0;width:763px;border-left:0"></div>
<div class="sp" style="left:766px;width:83px"></div>
<div class="sp" style="left:852px;width:64px"></div>
<div class="sp" style="left:919px;width:20px"></div>
<div class="t" style="left:768.500px;top:723.500px;font-size:10.500px">0:01@56Kbps</div>
<div class="t" style="left:854px;top:723.500px;font-size:10.500px">799 x 549</div>
<div class="t" style="left:921px;top:723.500px;font-size:10.500px">D</div>
<!-- bottom strip -->
<div class="a" style="left:0;top:736.500px;width:1024px;height:5.500px;background:#fcfcfd"></div>
<div class="a" style="left:0;top:737.800px;width:1024px;height:1.100px;background:#96969c"></div>
<div class="a" style="left:0;top:737.800px;width:91px;height:1.300px;background:#5e5e6a"></div>
<div class="a" style="left:0;top:739px;width:90px;height:3px;background:linear-gradient(#a8a8ba,#c4c4d6)"></div>
<div class="a" style="left:90px;top:737.800px;width:1.200px;height:5px;background:#484854"></div>
<div class="a" style="left:376px;top:739.500px;width:154px;height:3px;background:#b4b4d8;border-top:1px solid #68688c"></div>
<!-- IME bar -->
<div class="a" style="left:926px;top:720px;width:96px;height:18px;background:#f6f6fa;border:1px solid #8c8c94;border-radius:3px"></div>
<svg style="left:926px;top:720px" width="96" height="18" viewBox="926 720 96 18">
<rect x="931" y="723" width="1.200" height="12" fill="#9c9ca4"/>
<g stroke="#a018a0" fill="none" stroke-width="1.700" stroke-linecap="round"><path d="M943.500 722.500Q944.500 729 942.500 736"/><path d="M938 726.500Q943 724 949 725.500 950.500 729 947 731.500 942 732.500 938.500 731 937.500 728.500 938 726.500"/></g>
<path d="M955 725.500Q957.500 724 959.500 725.500L957.500 729z" fill="#a018a0"/><circle cx="963" cy="731" r="2.200" fill="none" stroke="#a018a0" stroke-width="1.400"/>
<path d="M979 723.500Q981.500 729 978.500 732.500T972.500 734Q978.500 731.500 979 723.500z" fill="#b018b0" stroke="#a018a0" stroke-width=".8"/>
<rect x="988.500" y="725.500" width="11.500" height="7" fill="#e8d0ec" stroke="#b080b8" stroke-width=".9"/><path d="M989 728h11M989 730.300h11M992 725.500v7M995 725.500v4.500M998 725.500v7" stroke="#b080b8" stroke-width=".7"/>
<rect x="1006.500" y="723.500" width="9.500" height="11" fill="#f4e8f4" stroke="#682068" stroke-width="1.100"/><rect x="1006.500" y="723.500" width="9.500" height="2.600" fill="#682068"/><path d="M1007 729h9M1007 731.500h9" stroke="#682068" stroke-width=".9"/>
</svg>
</div></body></html>
